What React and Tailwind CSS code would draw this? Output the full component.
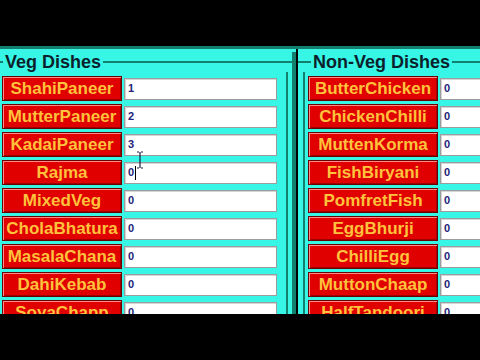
const veg = [
  ["ShahiPaneer", "1"],
  ["MutterPaneer", "2"],
  ["KadaiPaneer", "3"],
  ["Rajma", "0"],
  ["MixedVeg", "0"],
  ["CholaBhatura", "0"],
  ["MasalaChana", "0"],
  ["DahiKebab", "0"],
  ["SoyaChapp", "0"],
];
const nonVeg = [
  "ButterChicken",
  "ChickenChilli",
  "MuttenKorma",
  "FishBiryani",
  "PomfretFish",
  "EggBhurji",
  "ChilliEgg",
  "MuttonChaap",
  "HalfTandoori",
];

function Row({ name, value, btnW, inputW, cursor }) {
  return (
    <div className="flex items-center h-[25px] shrink-0 gap-[2px]">
      <div
        className={`${btnW} h-[25px] shrink-0 flex items-center justify-center bg-[#e00000] border border-[#6a0000] shadow-[inset_1px_1px_0_#ff8a8a,inset_-1px_-1px_0_#a00000] text-[17px] font-bold text-[#ffc23c] leading-none whitespace-nowrap`}
      >
        {name}
      </div>
      <div
        className={`${inputW} h-[22px] shrink-0 relative bg-white border border-[#9c9c9c] shadow-[inset_1px_1px_0_#d4d4d4] flex items-center pl-[3px] text-[11px] font-bold text-[#23237a] leading-none`}
      >
        <span>{value}</span>
        {cursor && (
          <>
            <span className="w-[1px] h-[14px] bg-black ml-[1px]" />
            <svg
              className="absolute left-[11px] top-[-12px]"
              width="8"
              height="18"
              viewBox="0 0 8 18"
            >
              <path
                d="M1 1h2M5 1h2M4 1v16M1 17h2M5 17h2"
                stroke="#1a1a40"
                strokeWidth="1.2"
                fill="none"
              />
            </svg>
          </>
        )}
      </div>
    </div>
  );
}

export default function App() {
  return (
    <div
      className="w-[480px] h-[360px] bg-black flex flex-col overflow-hidden"
      style={{ fontFamily: '"Liberation Sans", Arial, sans-serif' }}
    >
      <div className="h-[46px] shrink-0 bg-black" />
      <div className="h-[268px] shrink-0 bg-[#37f6e6] border-t-[3px] border-[#11806f] flex overflow-hidden">
        {/* Veg panel */}
        <div className="w-[298px] shrink-0 flex border-r-2 border-black">
          <div className="w-[292px] shrink-0 flex flex-col">
            <div className="flex items-center h-[20px] mt-[3px] shrink-0">
              <div className="w-[3px] h-[2px] bg-[#11806f]" />
              <span className="px-[2px] text-[18px] font-bold text-[#0b1f2c] leading-none">
                Veg Dishes
              </span>
              <div className="flex-1 h-[2px] bg-[#11806f]" />
            </div>
            <div className="flex-1 flex flex-col gap-[3px] pt-[4px] pl-[2px] border-r-2 border-[#11806f] w-[288px]">
              {veg.map(([n, v], i) => (
                <Row
                  key={n}
                  name={n}
                  value={v}
                  btnW="w-[120px]"
                  inputW="w-[153px]"
                  cursor={i === 3}
                />
              ))}
            </div>
          </div>
          <div className="w-[4px] shrink-0 bg-[#11806f] mt-[3px]" />
        </div>
        {/* Non-veg panel */}
        <div className="flex-1 flex flex-col pl-[5px] min-w-0">
          <div className="flex items-center h-[20px] mt-[3px] shrink-0 ml-[-5px]">
            <div className="w-[13px] h-[2px] bg-[#11806f]" />
            <span className="px-[2px] text-[18px] font-bold text-[#0b1f2c] leading-none whitespace-nowrap">
              Non-Veg Dishes
            </span>
            <div className="flex-1 h-[2px] bg-[#11806f]" />
          </div>
          <div className="flex-1 flex flex-col gap-[3px] pt-[4px] pl-[3px] border-l-2 border-[#11806f]">
            {nonVeg.map((n) => (
              <Row
                key={n}
                name={n}
                value="0"
                btnW="w-[130px]"
                inputW="w-[153px]"
              />
            ))}
          </div>
        </div>
      </div>
      <div className="flex-1 bg-black" />
    </div>
  );
}
